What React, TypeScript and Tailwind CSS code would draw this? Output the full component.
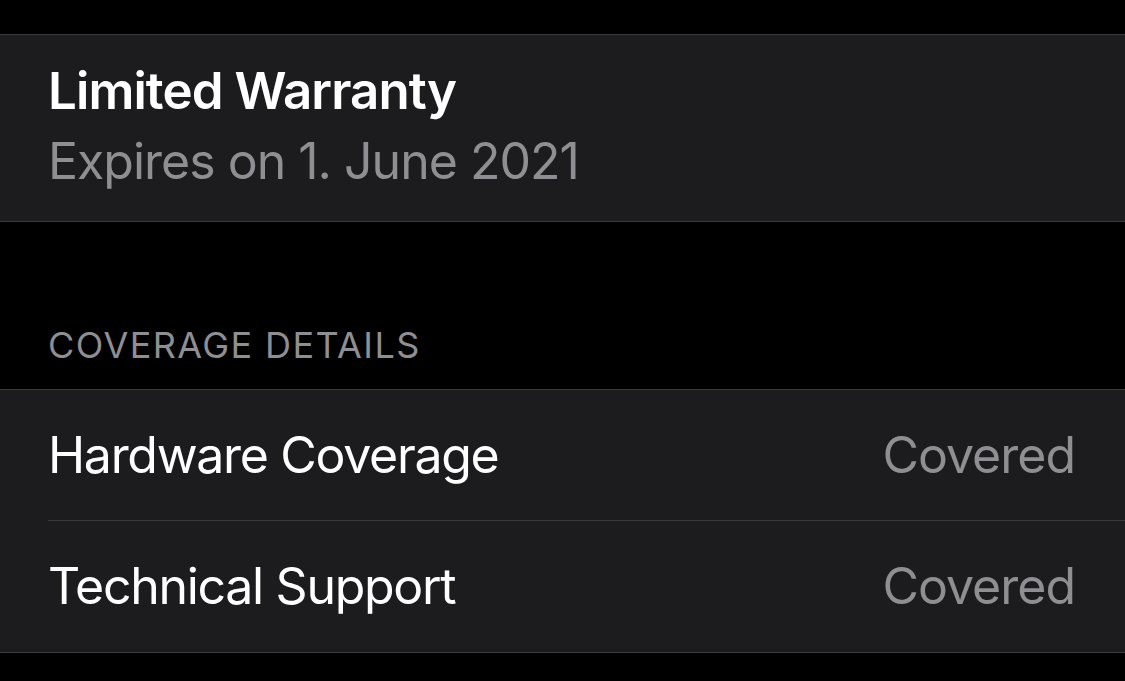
export default function App() {
  const rows = [
    { label: 'Hardware Coverage', value: 'Covered', h: 'h-[130px]' },
    { label: 'Technical Support', value: 'Covered', h: 'h-[132px] border-t border-[#3a3a3c]' },
  ]

  return (
    <div
      className="min-h-[681px] w-full bg-black pt-[34px] antialiased"
      style={{ fontFamily: 'Inter, "Noto Sans", sans-serif' }}
    >
      {/* Warranty card */}
      <div className="border-y border-[#3a3a3c] bg-[#1c1c1e] pb-[25px] pl-[48px] pt-[21px]">
        <div className="text-[51px] font-semibold leading-[70px] tracking-[-0.9px] text-white">
          Limited Warranty
        </div>
        <div className="text-[50px] leading-[70px] tracking-[-1px] text-[#8e8e93]">
          Expires on 1. June 2021
        </div>
      </div>

      {/* Section header */}
      <div className="flex h-[167px] items-end pb-[22px] pl-[48px]">
        <span className="text-[36px] uppercase leading-[44px] tracking-[1.4px] text-[#8e8e93]">
          Coverage Details
        </span>
      </div>

      {/* Coverage list */}
      <div className="border-y border-[#3a3a3c] bg-[#1c1c1e] pl-[48px]">
        {rows.map((row) => (
          <div key={row.label} className={`flex items-center justify-between pr-[50px] ${row.h}`}>
            <span className="text-[50px] tracking-[-1.3px] text-white">{row.label}</span>
            <span className="text-[50px] tracking-[-1px] text-[#8e8e93]">{row.value}</span>
          </div>
        ))}
      </div>
    </div>
  )
}
